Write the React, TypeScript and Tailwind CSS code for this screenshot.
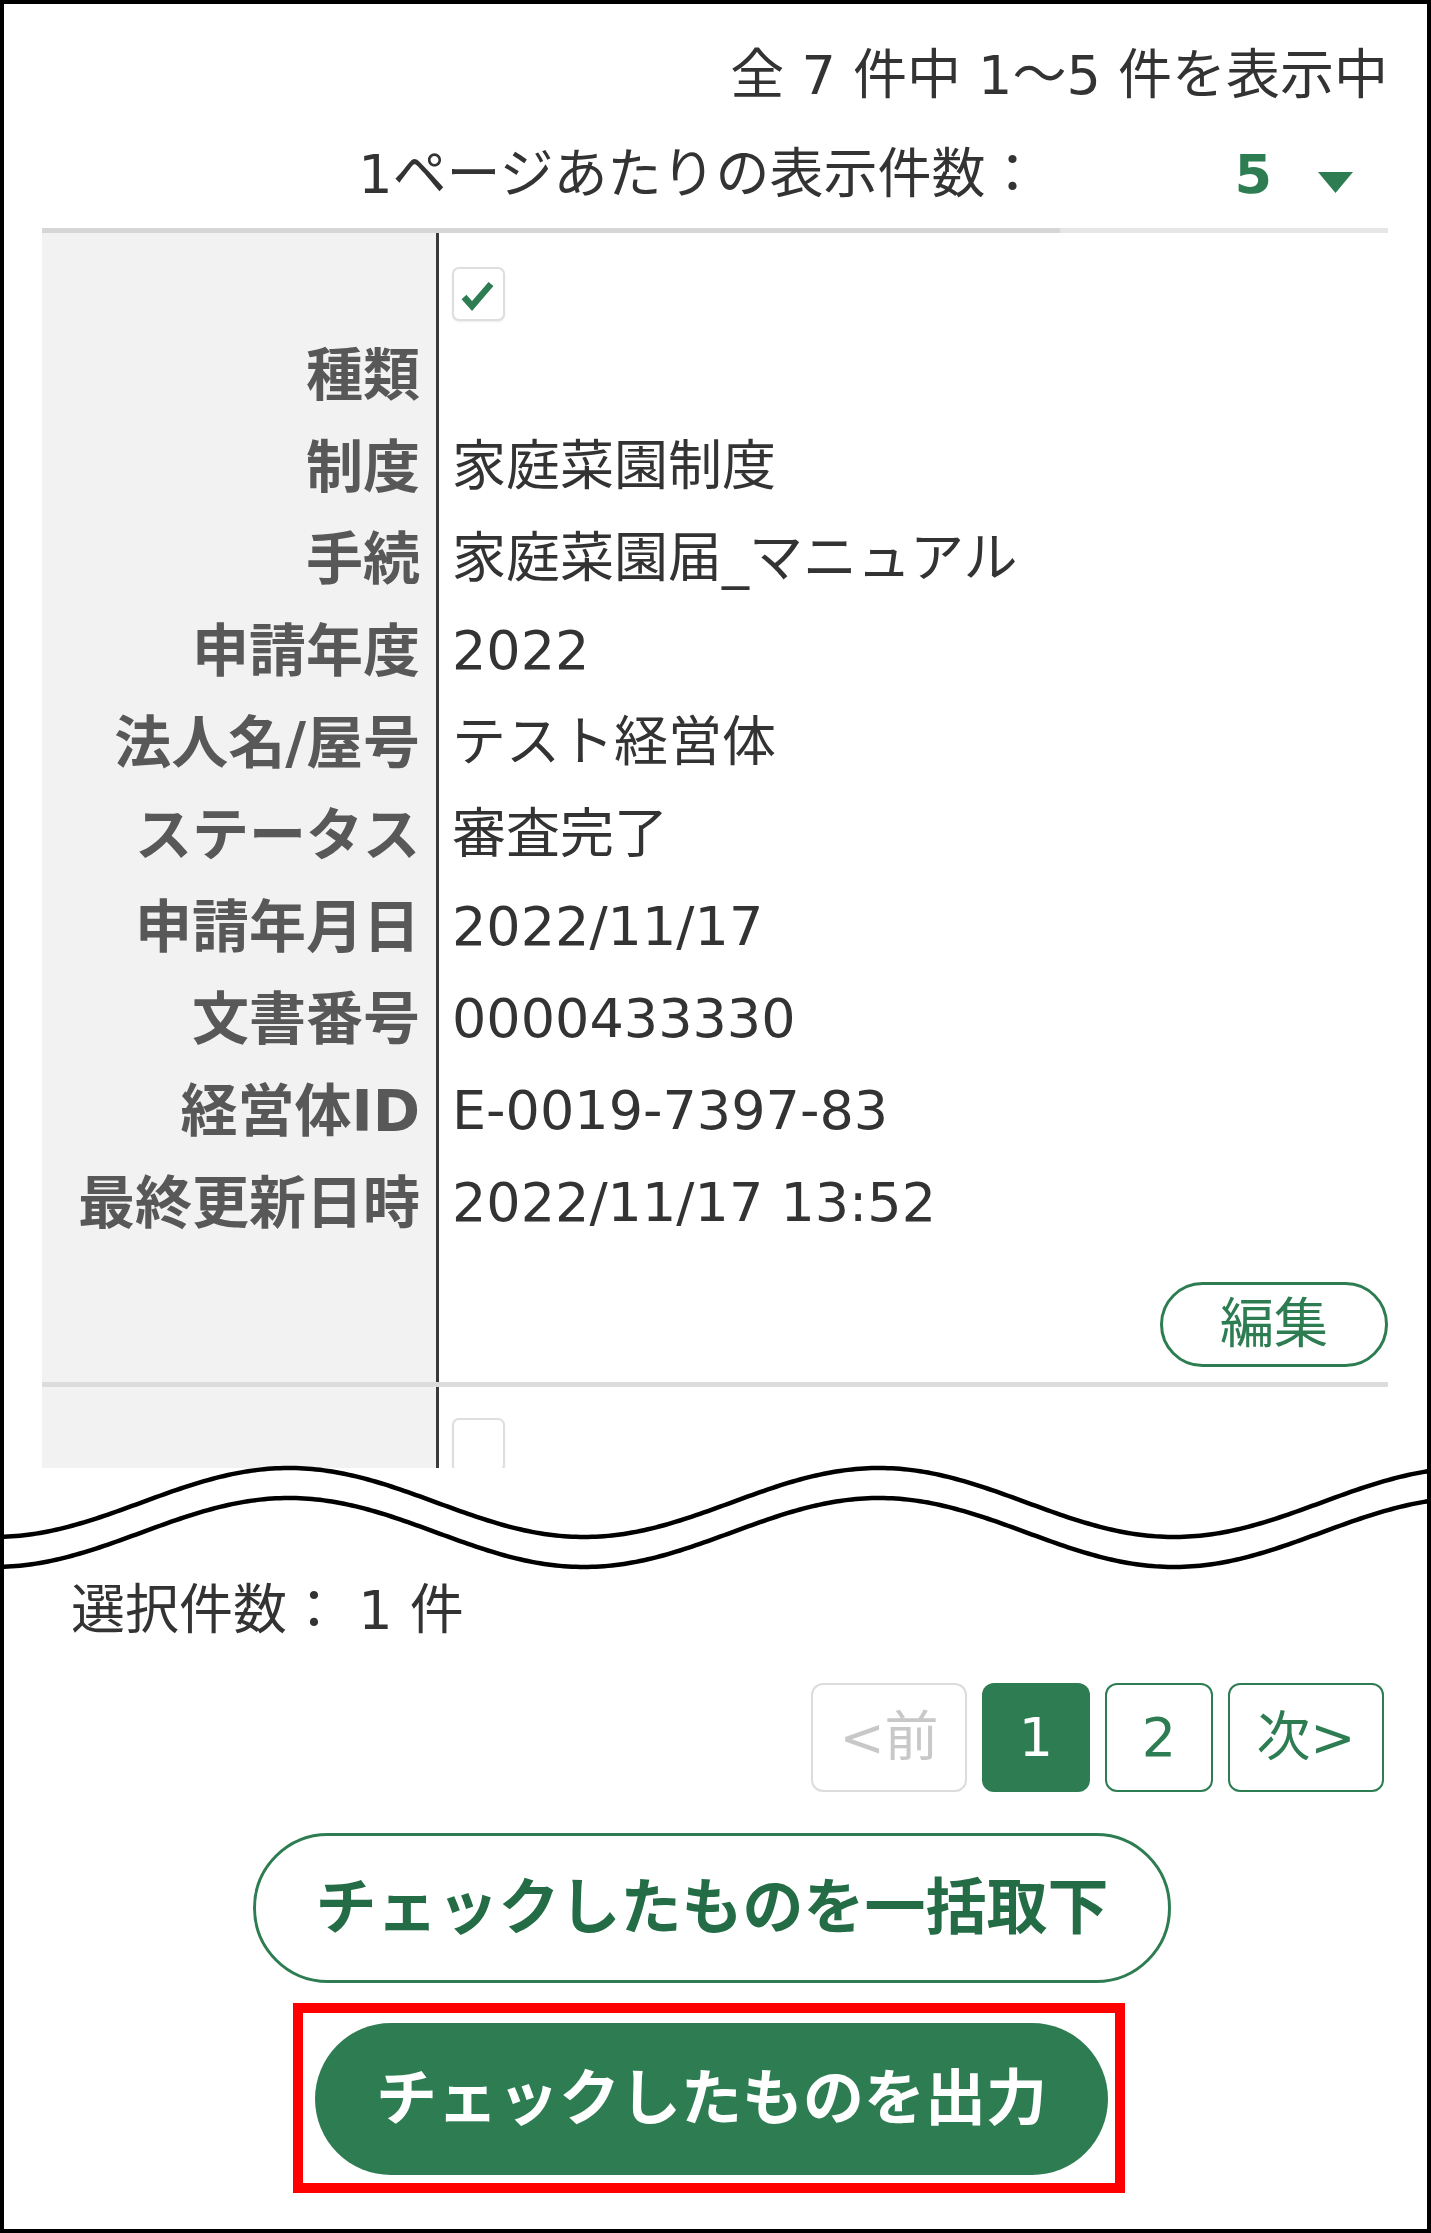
import React from "react";

const rows: [string, string][] = [
  ["種類", ""],
  ["制度", "家庭菜園制度"],
  ["手続", "家庭菜園届_マニュアル"],
  ["申請年度", "2022"],
  ["法人名/屋号", "テスト経営体"],
  ["ステータス", "審査完了"],
  ["申請年月日", "2022/11/17"],
  ["文書番号", "0000433330"],
  ["経営体ID", "E-0019-7397-83"],
  ["最終更新日時", "2022/11/17 13:52"],
];

function wavePath(offset: number) {
  const pts: string[] = [];
  for (let x = 0; x <= 1432; x += 4) {
    const y = 34.5 + 34.5 * Math.cos((2 * Math.PI * (x - 584)) / 590) + offset;
    pts.push(`${x - 4},${y.toFixed(2)}`);
  }
  return "M" + pts.join(" L");
}

function Checkbox({ checked }: { checked: boolean }) {
  return (
    <div className="w-[53px] h-[54px] rounded-[7px] border-2 border-[#dedede] bg-white shadow-[0_1px_2px_rgba(0,0,0,0.08)]">
      {checked && (
        <svg width="49" height="50" viewBox="0 0 49 50" className="block">
          <path d="M10 28 L18 37 L37 15" stroke="#2e7d52" strokeWidth="6.5" fill="none" strokeLinejoin="miter" />
        </svg>
      )}
    </div>
  );
}

function Entry() {
  return (
    <div className="flex">
      <div className="w-[397px] shrink-0 bg-[#f2f2f2] border-r-[3px] border-[#3a3a3a] pt-[96px] pr-[16px]">
        {rows.map(([l]) => (
          <div key={l} className="h-[92px] leading-[92px] text-right font-bold text-[#585858] text-[57px] whitespace-nowrap">
            {l}
          </div>
        ))}
      </div>
      <div className="flex-1 pl-[13px] pt-[34px]">
        <Checkbox checked={true} />
        <div className="mt-[8px]">
          {rows.map(([l, v]) => (
            <div key={l} className="h-[92px] leading-[92px] text-[54px] text-[#333] whitespace-nowrap">
              {v}
            </div>
          ))}
        </div>
        <div className="mt-[33px] mb-[15px] flex justify-end">
          <div className="w-[228px] h-[85px] rounded-full border-[3px] border-[#2e7d52] text-[#2e7d52] text-[54px] flex items-center justify-center">
            編集
          </div>
        </div>
      </div>
    </div>
  );
}

function EntryCut() {
  return (
    <div className="flex h-[200px]">
      <div className="w-[397px] shrink-0 bg-[#f2f2f2] border-r-[3px] border-[#3a3a3a]" />
      <div className="flex-1 pl-[13px] pt-[31px]">
        <Checkbox checked={false} />
      </div>
    </div>
  );
}

export default function App() {
  return (
    <div className="w-[1431px] h-[2233px] border-[4px] border-black bg-white overflow-hidden text-[#333] font-['DejaVu_Sans','Noto_Sans_CJK_JP',sans-serif]">
      <div className="h-[1464px] overflow-hidden pl-[38px] pr-[39px] pt-[37px]">
        <div className="h-[70px] leading-[70px] text-[54px] text-right whitespace-nowrap">全 7 件中 1～5 件を表示中</div>
        <div className="mt-[29px] h-[70px] flex items-center justify-end text-[54px] leading-[70px] whitespace-nowrap">
          <span>1ページあたりの表示件数：</span>
          <span className="ml-[195px] font-bold text-[#2e7d52]">5</span>
          <svg className="ml-[46px] mr-[35px] mt-[14px]" width="35" height="21" viewBox="0 0 35 21">
            <path d="M0 0 H35 L17.5 21 Z" fill="#2e7d52" />
          </svg>
        </div>
        <div className="mt-[18px] flex h-[5px]">
          <div className="flex-1 bg-[#d6d6d6]" />
          <div className="w-[328px] bg-[#e6e6e6]" />
        </div>
        <Entry />
        <div className="h-[5px] bg-[#dcdcdc]" />
        <EntryCut />
      </div>

      <svg width="1423" height="106" viewBox="0 0 1423 106" className="block overflow-visible">
        <path d={wavePath(0)} stroke="#000" strokeWidth="4.5" fill="none" />
        <path d={wavePath(30)} stroke="#000" strokeWidth="4.5" fill="none" />
      </svg>

      <div>
        <div className="pl-[67px] mt-[2px] h-[70px] leading-[70px] text-[54px] whitespace-nowrap">選択件数： 1 件</div>
        <div className="mt-[37px] pr-[43px] flex justify-end gap-[15px] text-[54px]">
          <div className="w-[156px] h-[109px] rounded-[12px] border-2 border-[#dcdcdc] text-[#c8c8c8] flex items-center justify-center">
            &lt;前
          </div>
          <div className="w-[108px] h-[109px] rounded-[12px] bg-[#2e7d52] text-white flex items-center justify-center">1</div>
          <div className="w-[108px] h-[109px] rounded-[12px] border-2 border-[#2e7d52] text-[#2e7d52] flex items-center justify-center">2</div>
          <div className="w-[156px] h-[109px] rounded-[12px] border-2 border-[#2e7d52] text-[#2e7d52] flex items-center justify-center">
            次&gt;
          </div>
        </div>
        <div className="mt-[41px] mr-[7px] flex justify-center">
          <div className="w-[918px] h-[150px] rounded-full border-[3px] border-[#2e7d52] bg-white text-[#236c45] font-bold text-[61px] flex items-center justify-center whitespace-nowrap">
            チェックしたものを一括取下
          </div>
        </div>
        <div className="mt-[20px] mr-[13px] flex justify-center">
          <div className="border-[10px] border-[#ff0000] pl-[12px] pr-[7px] pt-[10px] pb-[8px]">
            <div className="w-[793px] h-[152px] rounded-full bg-[#2e7d52] text-white font-bold text-[61px] flex items-center justify-center whitespace-nowrap">
              チェックしたものを出力
            </div>
          </div>
        </div>
      </div>
    </div>
  );
}
